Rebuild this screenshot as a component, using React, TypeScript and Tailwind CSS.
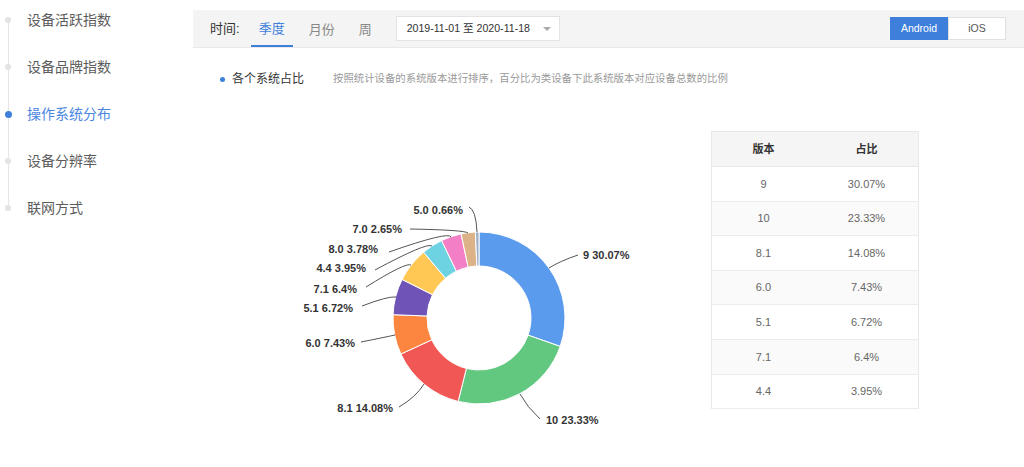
import { FC } from 'react';

const font = { fontFamily: '"Liberation Sans", "Noto Sans CJK SC", sans-serif' };

const menu = ['设备活跃指数', '设备品牌指数', '操作系统分布', '设备分辨率', '联网方式'];

const slices = [
  { name: '9', value: 30.07, color: '#5b9bed' },
  { name: '10', value: 23.33, color: '#62c87f' },
  { name: '8.1', value: 14.08, color: '#f15755' },
  { name: '6.0', value: 7.43, color: '#fc863f' },
  { name: '5.1', value: 6.72, color: '#7053b6' },
  { name: '7.1', value: 6.4, color: '#ffc754' },
  { name: '4.4', value: 3.95, color: '#6dd2e2' },
  { name: '8.0', value: 3.78, color: '#f37fc6' },
  { name: '7.0', value: 2.65, color: '#dcb388' },
  { name: '5.0', value: 0.66, color: '#9eb0c8' },
];

// leader lines: edge point, bend, end; label position and anchor
const labels: { p: number[][]; x: number; y: number; end?: boolean }[] = [
  { p: [[549, 268], [560, 261], [578, 255]], x: 583, y: 255 },
  { p: [[520, 394], [527, 407], [540, 419]], x: 546, y: 420 },
  { p: [[424, 384], [416, 397], [399, 407]], x: 393, y: 408, end: true },
  { p: [[395, 335], [386, 337], [361, 342]], x: 355, y: 343, end: true },
  { p: [[396, 297], [388, 296], [362, 306]], x: 353, y: 308, end: true },
  { p: [[411, 265], [406, 262], [366, 287]], x: 357, y: 289, end: true },
  { p: [[432, 246], [427, 242], [375, 270]], x: 366, y: 268, end: true },
  { p: [[451, 237], [449, 231], [389, 252]], x: 378, y: 249, end: true },
  { p: [[468, 233], [465, 230], [410, 229]], x: 402, y: 229, end: true },
  { p: [[477, 232], [476, 210], [469, 207]], x: 463, y: 210, end: true },
];

const rows = [
  ['9', '30.07%'],
  ['10', '23.33%'],
  ['8.1', '14.08%'],
  ['6.0', '7.43%'],
  ['5.1', '6.72%'],
  ['7.1', '6.4%'],
  ['4.4', '3.95%'],
];

const CX = 479;
const CY = 318;
const R = 86;
const r = 52;

const pt = (rad: number, deg: number) => {
  const a = (deg * Math.PI) / 180;
  return [CX + rad * Math.sin(a), CY - rad * Math.cos(a)];
};

const arc = (a0: number, a1: number) => {
  const large = a1 - a0 > 180 ? 1 : 0;
  const [x0, y0] = pt(R, a0);
  const [x1, y1] = pt(R, a1);
  const [x2, y2] = pt(r, a1);
  const [x3, y3] = pt(r, a0);
  return `M${x0} ${y0} A${R} ${R} 0 ${large} 1 ${x1} ${y1} L${x2} ${y2} A${r} ${r} 0 ${large} 0 ${x3} ${y3} Z`;
};

const Donut: FC = () => {
  const total = slices.reduce((s, d) => s + d.value, 0);
  let acc = 0;
  return (
    <svg width={500} height={340} className="shrink-0">
      <g transform="translate(-200,-100)">
        {slices.map((s) => {
          const a0 = (acc / total) * 360;
          acc += s.value;
          const a1 = (acc / total) * 360;
          return <path key={s.name} d={arc(a0, a1)} fill={s.color} stroke="#fff" strokeWidth={1} />;
        })}
        {labels.map((l, i) => (
          <g key={i}>
            <path
              d={`M${l.p[0][0]} ${l.p[0][1]} Q${l.p[1][0]} ${l.p[1][1]} ${l.p[2][0]} ${l.p[2][1]}`}
              fill="none"
              stroke="#555"
              strokeWidth={1}
            />
            <text
              x={l.x}
              y={l.y}
              textAnchor={l.end ? 'end' : 'start'}
              dominantBaseline="central"
              fontSize={11}
              fontWeight={700}
              fill="#333"
              style={font}
            >
              {slices[i].name} {slices[i].value}%
            </text>
          </g>
        ))}
      </g>
    </svg>
  );
};

export default function App() {
  return (
    <div className="flex w-[1024px] h-[467px] bg-white overflow-hidden" style={font}>
      {/* sidebar */}
      <div className="relative w-[193px] shrink-0 flex flex-col gap-[7px]">
        <div className="absolute left-[8px] top-[20px] h-[188px] w-px bg-[#e6e6e6]" />
        {menu.map((m, i) => (
          <div key={m} className="relative h-[40px] flex items-center">
            <span
              className={
                i === 2
                  ? 'absolute left-[4.5px] w-[7px] h-[7px] rounded-full bg-[#3e7fdc]'
                  : 'absolute left-[5px] w-[6px] h-[6px] rounded-full bg-[#e3e3e3]'
              }
            />
            <span className={i === 2 ? 'ml-[27px] text-[14px] text-[#4a86de]' : 'ml-[27px] text-[14px] text-[#5c5c5c]'}>
              {m}
            </span>
          </div>
        ))}
      </div>

      {/* main */}
      <div className="flex-1 flex flex-col">
        <div className="mt-[10px] h-[38px] bg-[#f4f4f4] border-b border-[#e9e9e9] flex items-center pl-[17px] pr-[18px]">
          <span className="text-[13px] text-[#333]">时间:</span>
          <div className="ml-[11px] flex h-full gap-[8px]">
            <div className="h-full px-[8px] flex items-center text-[13px] text-[#3e7fdc] border-b-2 border-[#3e7fdc] pt-[2px]">
              季度
            </div>
            <div className="h-full px-[8px] flex items-center text-[13px] text-[#888] pt-[2px]">月份</div>
            <div className="h-full px-[8px] flex items-center text-[13px] text-[#888] pt-[2px]">周</div>
          </div>
          <div className="ml-[16px] w-[164px] h-[25px] bg-white border border-[#e3e3e3] flex items-center pl-[10px] pr-[8px]">
            <span className="text-[10.6px] text-[#333] flex-1">2019-11-01 至 2020-11-18</span>
            <span className="w-0 h-0 border-l-[4px] border-r-[4px] border-t-[4px] border-l-transparent border-r-transparent border-t-[#aaa]" />
          </div>
          <div className="ml-auto flex h-[23px]">
            <div className="w-[58px] flex items-center justify-center bg-[#3d7fdb] text-white text-[10.5px]">Android</div>
            <div className="w-[58px] flex items-center justify-center bg-white border border-[#e0e0e0] text-[#555] text-[10.5px]">
              iOS
            </div>
          </div>
        </div>

        <div className="mt-[22px] h-[18px] flex items-center pl-[27px]">
          <span className="w-[5px] h-[5px] rounded-full bg-[#3e7fdc]" />
          <span className="ml-[7px] text-[12px] text-[#333]">各个系统占比</span>
          <span className="ml-[29px] text-[10.4px] text-[#999]">
            按照统计设备的系统版本进行排序，百分比为类设备下此系统版本对应设备总数的比例
          </span>
        </div>

        <div className="mt-[12px] flex pl-[7px]">
          <Donut />
          <div className="ml-[11px] mt-[31px] w-[208px] h-[278px] border border-[#e8e8e8] text-[11px] self-start">
            <div className="h-[35px] grid grid-cols-2 bg-[#f5f5f5] border-b border-[#e8e8e8] font-bold text-[#333]">
              <div className="flex items-center justify-center">版本</div>
              <div className="flex items-center justify-center">占比</div>
            </div>
            {rows.map((row, i) => (
              <div
                key={row[0]}
                className={
                  i % 2 === 1
                    ? 'h-[34.6px] grid grid-cols-2 bg-[#fafafa] border-b border-[#ececec] text-[#666]'
                    : 'h-[34.6px] grid grid-cols-2 bg-white border-b border-[#ececec] text-[#666]'
                }
              >
                <div className="flex items-center justify-center">{row[0]}</div>
                <div className="flex items-center justify-center">{row[1]}</div>
              </div>
            ))}
          </div>
        </div>
      </div>
    </div>
  );
}
